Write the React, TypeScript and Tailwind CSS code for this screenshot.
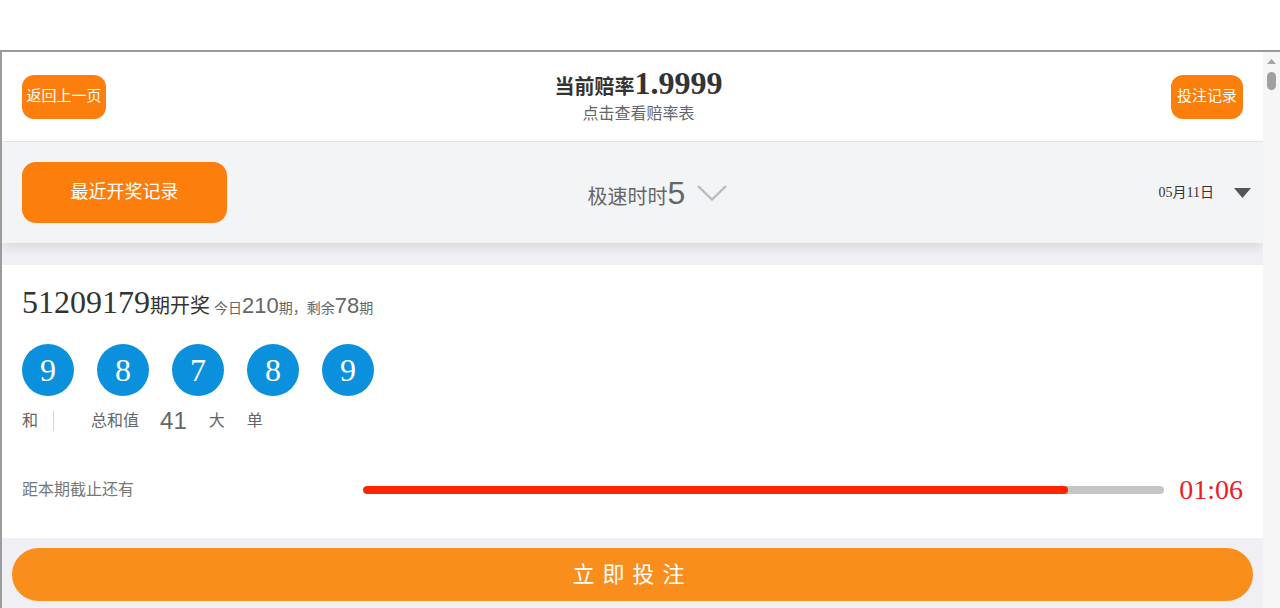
const balls = [9, 8, 7, 8, 9]

export default function App() {
  return (
    <div className="min-h-screen bg-white pt-[50px] [font-family:'Liberation_Serif','Noto_Sans_CJK_SC',serif]">
      <div className="flex h-[558px] border-t-2 border-l-2 border-[#9b9b9b]">
        <div className="flex-1 overflow-hidden bg-[#efeff4]">
          {/* Header */}
          <div className="flex h-[90px] items-center justify-between border-b border-[#e6e6e6] bg-white px-5">
            <button className="flex h-[44px] w-[84px] items-center justify-center rounded-xl bg-[#fc7e0d] text-[15px] text-white">
              返回上一页
            </button>
            <div className="flex-1 text-center">
              <div className="h-[34px] leading-[34px] font-bold text-[#333]">
                <span className="text-[20px]">当前赔率</span>
                <span className="text-[32px]">1.9999</span>
              </div>
              <div className="h-[28px] text-[16px] leading-[28px] text-[#666]">点击查看赔率表</div>
            </div>
            <button className="flex h-[44px] w-[72px] items-center justify-center rounded-xl bg-[#fc7e0d] text-[15px] text-white">
              投注记录
            </button>
          </div>

          {/* Game bar */}
          <div className="relative flex h-[101px] items-center bg-[#f3f4f6] pl-5 pr-3 shadow-[0_5px_10px_rgba(0,0,0,0.09)]">
            <button className="flex h-[61px] w-[205px] items-center justify-center rounded-[14px] bg-[#fc7e0d] text-[18px] text-white">
              最近开奖记录
            </button>
            <div className="flex flex-1 justify-center">
              <div className="relative flex items-baseline text-[#666] [font-family:'Liberation_Sans','Noto_Sans_CJK_SC',sans-serif]">
                <span className="text-[20px]">极速时时</span>
                <span className="text-[32px]">5</span>
                <svg className="absolute left-full top-1/2 ml-3 h-[16px] w-[30px] -translate-y-1/2" viewBox="0 0 30 16" fill="none">
                  <polyline points="1,1 15,14.5 29,1" stroke="#bbb" strokeWidth="2.4" />
                </svg>
              </div>
            </div>
            <div className="flex w-[205px] items-center justify-end">
              <span className="text-[14px] text-[#333]">05月11日</span>
              <svg className="ml-5 h-[10px] w-[17px]" viewBox="0 0 17 10">
                <polygon points="0,0 17,0 8.5,10" fill="#555" />
              </svg>
            </div>
          </div>

          {/* Current draw */}
          <div className="mt-[22px] bg-white px-5 pt-[19px] pb-[28px]">
            <div className="flex h-[37px] items-baseline text-[#333]">
              <span className="text-[32px] leading-[37px]">51209179</span>
              <span className="text-[20px] leading-none">期开奖</span>
              <span className="ml-1 leading-none text-[#666] [font-family:'Liberation_Sans','Noto_Sans_CJK_SC',sans-serif]">
                <span className="text-[14px]">今日</span>
                <span className="text-[22px]">210</span>
                <span className="text-[14px]">期，剩余</span>
                <span className="text-[22px]">78</span>
                <span className="text-[14px]">期</span>
              </span>
            </div>

            <div className="mt-[23px] flex gap-[23px]">
              {balls.map((n, i) => (
                <div
                  key={i}
                  className="flex h-[52px] w-[52px] items-center justify-center rounded-full bg-[#0a90dc] text-[32px] leading-none text-white"
                >
                  {n}
                </div>
              ))}
            </div>

            <div className="mt-[11px] flex h-[28px] items-center text-[#666] [font-family:'Liberation_Sans','Noto_Sans_CJK_SC',sans-serif]">
              <span className="text-[16px]">和</span>
              <span className="ml-[15px] h-[20px] w-px bg-[#d4d4d4]"></span>
              <span className="ml-[37px] text-[16px]">总和值</span>
              <span className="ml-[21px] text-[24px]">41</span>
              <span className="ml-[22px] text-[16px]">大</span>
              <span className="ml-[22px] text-[16px]">单</span>
            </div>

            <div className="mt-[35px] flex h-[40px] items-center">
              <span className="w-[341px] text-[16px] text-[#777]">距本期截止还有</span>
              <div className="h-2 flex-1 overflow-hidden rounded-full bg-[#c6c6c6]">
                <div className="h-full w-[88%] rounded-full bg-[#ff2300]"></div>
              </div>
              <span className="ml-[15px] text-[28px] leading-[40px] text-[#ee1c25]">01:06</span>
            </div>
          </div>

          {/* Bet button */}
          <div className="px-[10px] pt-[10px]">
            <button className="flex h-[53px] w-full items-center justify-center rounded-full bg-[#fa8e1d] text-[22px] tracking-[8px] text-white">
              立即投注
            </button>
          </div>
        </div>

        {/* Scrollbar */}
        <div className="flex w-[17px] flex-col items-center bg-[#f6f6f6] pt-[7px]">
          <svg className="h-[5px] w-[9px]" viewBox="0 0 9 5">
            <polygon points="4.5,0 9,5 0,5" fill="#a3a3a3" />
          </svg>
          <div className="mt-[8px] h-[18px] w-[9px] rounded-full bg-[#a0a0a0]"></div>
        </div>
      </div>
    </div>
  )
}
